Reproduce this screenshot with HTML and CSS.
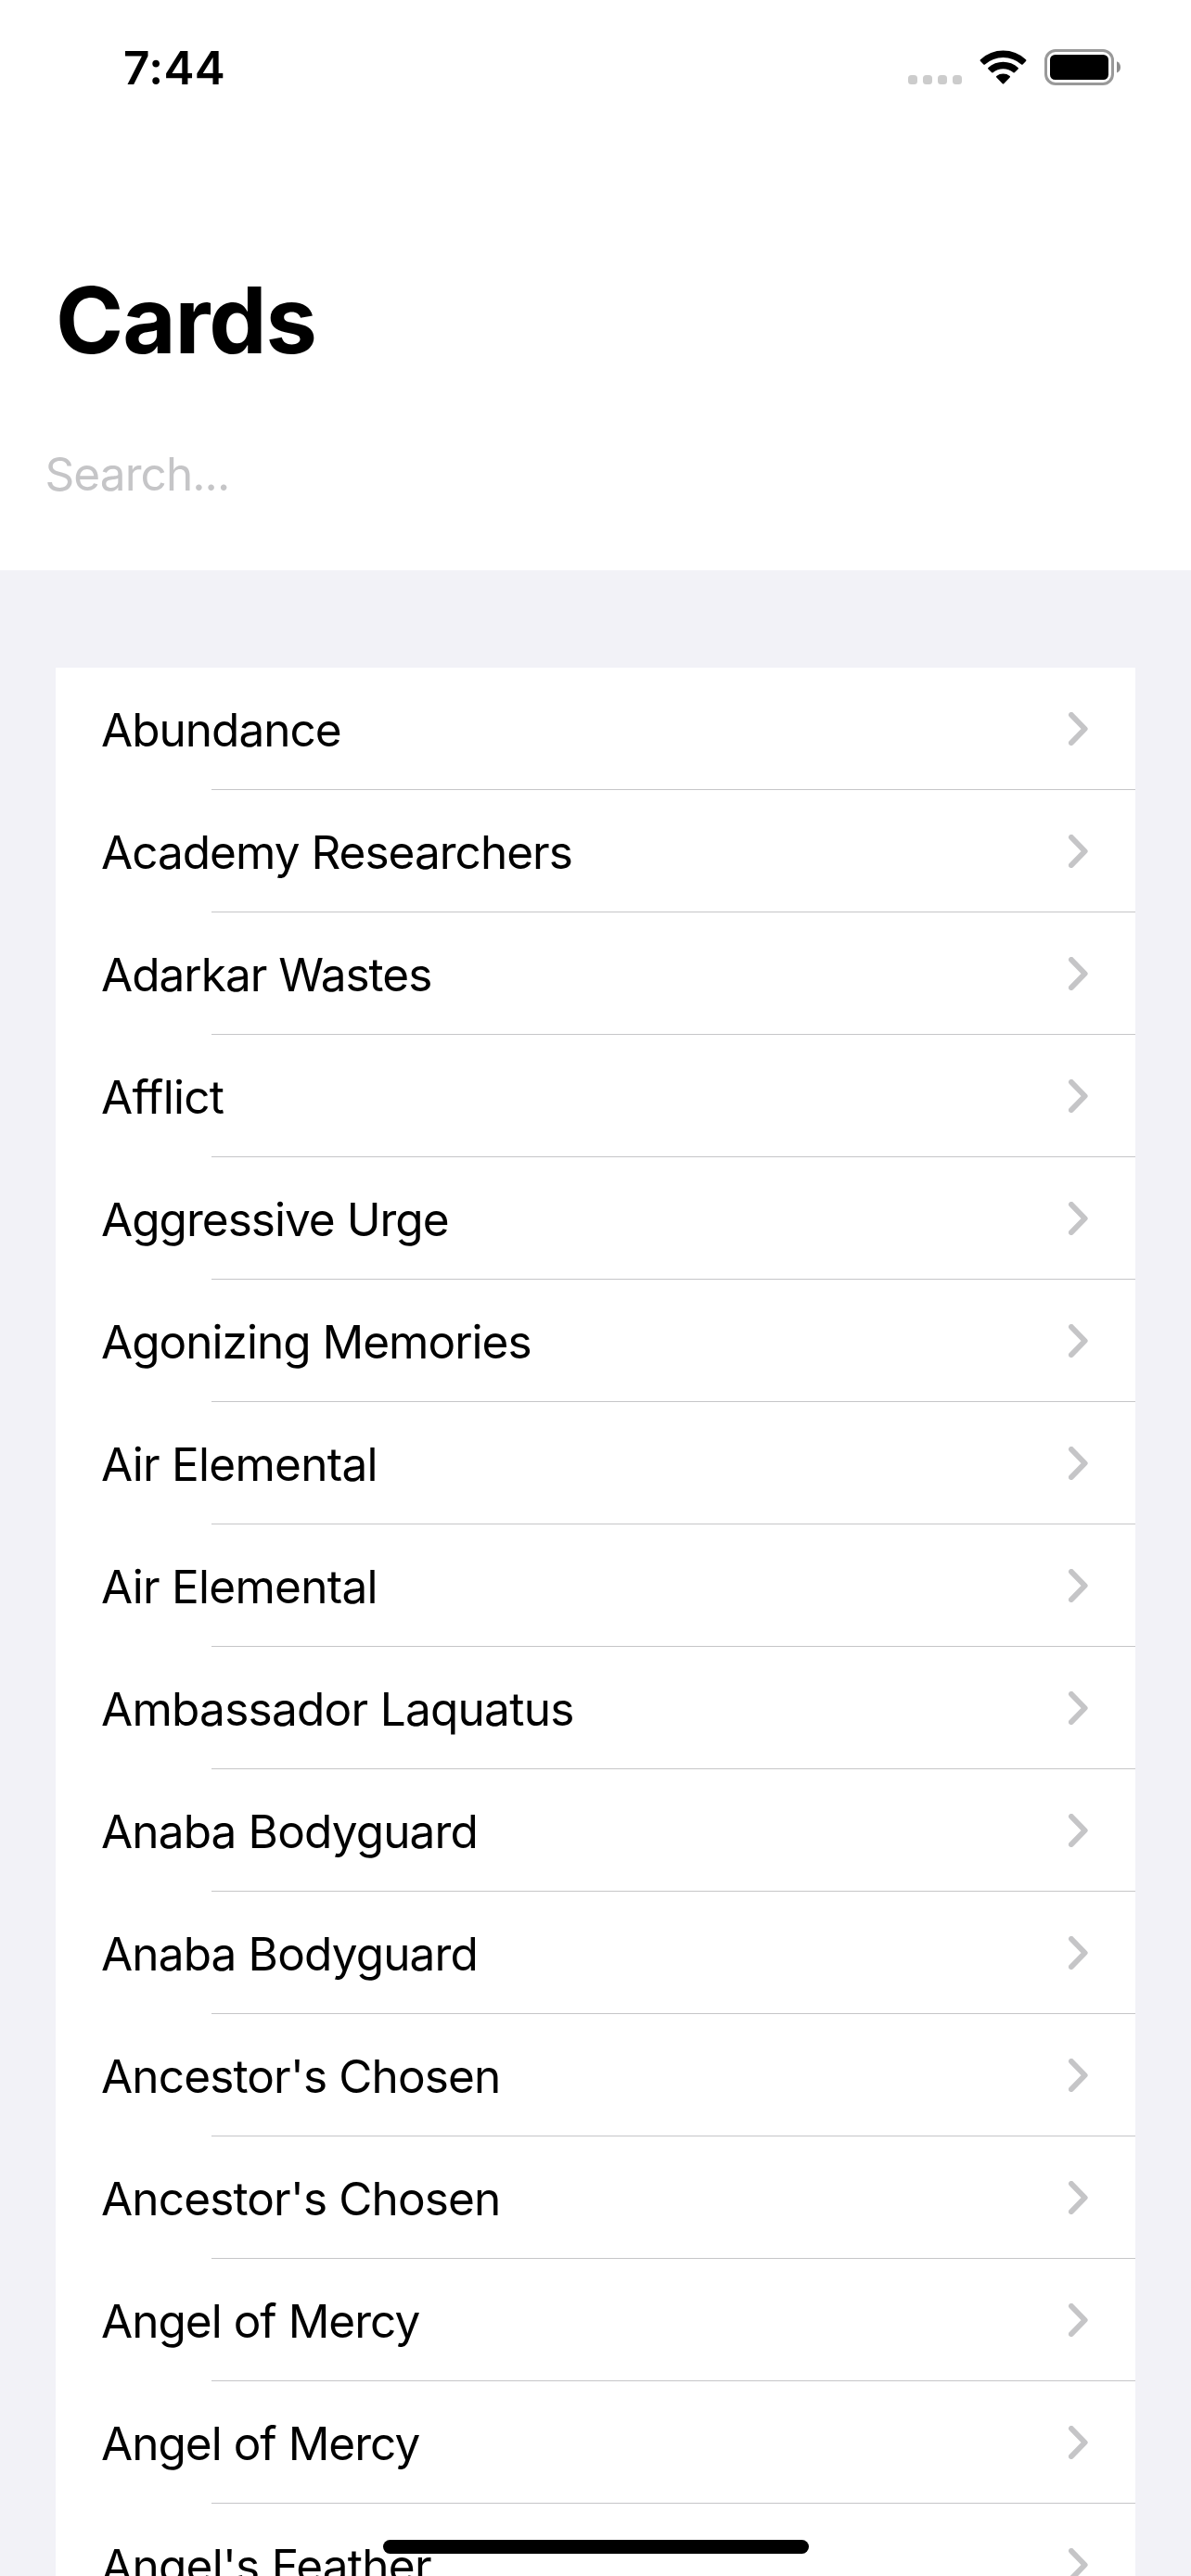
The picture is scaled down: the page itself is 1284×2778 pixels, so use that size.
FILE: index.html
```html
<!DOCTYPE html>
<html lang="en">
<head>
<meta charset="utf-8">
<title>Cards</title>
<link rel="stylesheet" href="styles.css">
</head>
<body>
<svg class="defs" width="0" height="0" aria-hidden="true">
  <symbol id="chevron" viewBox="0 0 21 36">
    <path d="M3 3 17.6 18 3 33" fill="none" stroke="#c5c5c7" stroke-width="6" stroke-linecap="round" stroke-linejoin="round"/>
  </symbol>
</svg>
<div class="screen">
  <header class="header">
    <div class="status">
      <span class="time">7:44</span>
      <div class="indicators">
        <div class="signal"><i></i><i></i><i></i><i></i></div>
        <svg class="wifi" width="51" height="38" viewBox="0 0 51 38">
          <path d="M1 10.2A36 36 0 0 1 50 10.2Q50.9 11 50 11.9L46.6 15.4Q45.9 16 45.1 15.4A30 30 0 0 0 5.9 15.4Q5.1 16 4.4 15.4L1 11.9Q.1 11 1 10.2Z"/>
          <path d="M9.4 18.9A24 24 0 0 1 41.6 18.9Q42.4 19.7 41.6 20.5L38 24.1Q37.3 24.8 36.5 24.2A17.5 17.5 0 0 0 14.5 24.2Q13.7 24.8 13 24.1L9.4 20.5Q8.6 19.7 9.4 18.9Z"/>
          <path d="M18.3 28A12 12 0 0 1 32.7 28Q33.4 28.8 32.7 29.6L26.2 36.2Q25.5 37 24.8 36.2L18.3 29.6Q17.6 28.8 18.3 28Z"/>
        </svg>
        <svg class="battery" width="82" height="39" viewBox="0 0 82 39">
          <rect x="1.5" y="1.5" width="72" height="36" rx="10.5" fill="none" stroke="#999" stroke-width="3"/>
          <rect x="6" y="6" width="63" height="27" rx="5.5"/>
          <path d="M78 13.3Q82 15.2 82 19.4T78 25.5Z" fill="#8c8c8c"/>
        </svg>
      </div>
    </div>
    <h1 class="title">Cards</h1>
    <div class="search">Search...</div>
  </header>
  <main class="content">
    <ul class="list">
      <li class="row"><span class="name tight">Abundance</span><svg class="chev"><use href="#chevron"/></svg></li>
      <li class="row"><span class="name tight">Academy Researchers</span><svg class="chev"><use href="#chevron"/></svg></li>
      <li class="row"><span class="name tight">Adarkar Wastes</span><svg class="chev"><use href="#chevron"/></svg></li>
      <li class="row"><span class="name loose">Afflict</span><svg class="chev"><use href="#chevron"/></svg></li>
      <li class="row"><span class="name tight">Aggressive Urge</span><svg class="chev"><use href="#chevron"/></svg></li>
      <li class="row"><span class="name tight">Agonizing Memories</span><svg class="chev"><use href="#chevron"/></svg></li>
      <li class="row"><span class="name loose">Air Elemental</span><svg class="chev"><use href="#chevron"/></svg></li>
      <li class="row"><span class="name loose">Air Elemental</span><svg class="chev"><use href="#chevron"/></svg></li>
      <li class="row"><span class="name loose">Ambassador Laquatus</span><svg class="chev"><use href="#chevron"/></svg></li>
      <li class="row"><span class="name">Anaba Bodyguard</span><svg class="chev"><use href="#chevron"/></svg></li>
      <li class="row"><span class="name">Anaba Bodyguard</span><svg class="chev"><use href="#chevron"/></svg></li>
      <li class="row"><span class="name">Ancestor's Chosen</span><svg class="chev"><use href="#chevron"/></svg></li>
      <li class="row"><span class="name">Ancestor's Chosen</span><svg class="chev"><use href="#chevron"/></svg></li>
      <li class="row"><span class="name tight">Angel of Mercy</span><svg class="chev"><use href="#chevron"/></svg></li>
      <li class="row"><span class="name tight">Angel of Mercy</span><svg class="chev"><use href="#chevron"/></svg></li>
      <li class="row"><span class="name loose">Angel's Feather</span><svg class="chev"><use href="#chevron"/></svg></li>
    </ul>
  </main>
  <div class="home-indicator"></div>
</div>
</body>
</html>
```
FILE: styles.css
```css
* { box-sizing: border-box; }
body {
  margin: 0;
  background: #f2f2f7;
  color: #000;
  font-family: Inter, "Liberation Sans", sans-serif;
  font-size: 49.5px;
  line-height: 60px;
}
.defs { display: none; }
.screen {
  position: relative;
  width: 1284px;
  height: 2778px;
  overflow: hidden;
}
.header {
  height: 615px;
  padding-top: 43px;
  background: #fff;
}
.status {
  display: flex;
  justify-content: space-between;
  height: 60px;
  padding: 0 76px 0 133px;
}
.time { font-weight: 600; letter-spacing: 0.4px; }
.indicators {
  display: flex;
  align-items: flex-start;
  padding-top: 10px;
}
.signal {
  display: flex;
  gap: 6px;
  margin: 28px 19px 0 0;
}
.signal i {
  width: 10px;
  height: 10px;
  border-radius: 3.5px;
  background: #ccc;
}
.wifi { margin: 1px 19px 0 0; }
.title {
  margin: 182px 0 0 60px;
  font-size: 99px;
  font-weight: 700;
  line-height: 120px;
  letter-spacing: -1.1px;
}
.search {
  margin: 76px 0 0 48.5px;
  color: #c5c5c7;
  letter-spacing: -0.92px;
}
.content { padding: 105px 60px 0; }
.list {
  margin: 0;
  padding: 0;
  list-style: none;
  background: #fff;
}
.row {
  display: flex;
  align-items: center;
  justify-content: space-between;
  height: 132px;
  padding: 0 51px 0 49px;
  background: linear-gradient(#c6c6c8, #c6c6c8) 168px 100% / 100% 1px no-repeat;
}
.name {
  padding-top: 2px;
  letter-spacing: -0.85px;
  white-space: nowrap;
}
.tight { letter-spacing: -0.98px; }
.loose { letter-spacing: -0.73px; }
.chev { width: 21px; height: 36px; }
.home-indicator {
  position: absolute;
  left: 413px;
  top: 2739px;
  width: 459px;
  height: 15px;
  border-radius: 8px;
  background: #000;
}
```
